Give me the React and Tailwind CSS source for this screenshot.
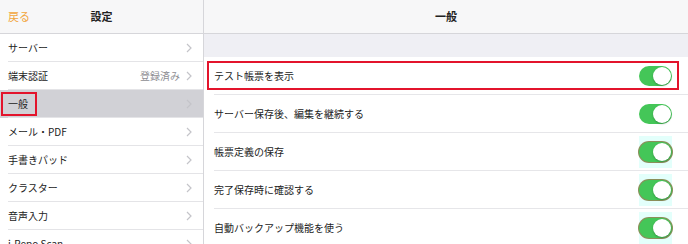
const leftItems = [
  { label: 'サーバー' },
  { label: '端末認証', value: '登録済み' },
  { label: '一般', selected: true },
  { label: 'メール・PDF' },
  { label: '手書きパッド' },
  { label: 'クラスター' },
  { label: '音声入力' },
  { label: 'i-Repo Scan' },
]

const settings = [
  { label: 'テスト帳票を表示', marked: true },
  { label: 'サーバー保存後、編集を継続する' },
  { label: '帳票定義の保存', tint: true },
  { label: '完了保存時に確認する', tint: true },
  { label: '自動バックアップ機能を使う', tint: true },
]

const Chevron = () => (
  <svg width="6" height="10" viewBox="0 0 6 10" className="shrink-0">
    <path d="M1 1l4 4-4 4" fill="none" stroke="#c4c4c9" strokeWidth="1.2" />
  </svg>
)

const Toggle = ({ tint }) => (
  <div className={`flex h-[32px] w-[33px] items-center justify-center ${tint ? 'bg-[#e3fffb]' : ''}`}>
    <div className={`flex h-[20px] w-[33px] items-center justify-end rounded-full bg-[#44c658] p-[1px] ${tint ? 'ring-1 ring-[#8b8f5a]' : ''}`}>
      <div className="h-[18px] w-[18px] rounded-full bg-white shadow-[0_1px_2px_rgba(0,0,0,0.25)]" />
    </div>
  </div>
)

export default function App() {
  return (
    <div className="flex h-[244px] w-[688px] overflow-hidden bg-white text-[#222] font-['Noto_Sans_CJK_JP',sans-serif]">
      {/* Left - menu */}
      <div className="flex w-[204px] shrink-0 flex-col border-r border-[#d6d6da]">
        <div className="grid h-[34px] shrink-0 grid-cols-3 items-center border-b border-[#d6d6da] bg-[#f7f7f8] px-2">
          <span className="text-[11px] text-[#f2a53c]">戻る</span>
          <span className="text-center text-[11px] font-bold">設定</span>
          <span />
        </div>
        {leftItems.map((item) => (
          <div
            key={item.label}
            className={`h-[28px] shrink-0 pl-2 ${item.selected ? 'bg-[#d1d1d6]' : ''}`}
          >
            <div className="flex h-full items-center justify-between border-b border-[#e4e4e7] pr-[11px]">
              {item.selected ? (
                <span className="-ml-[7px] flex h-[24px] items-center border-2 border-[#e3142c] pl-[5px] pr-[7px] text-[10px]">
                  {item.label}
                </span>
              ) : (
                <span className="text-[10px]">{item.label}</span>
              )}
              <div className="flex items-center gap-[6px]">
                {item.value && <span className="text-[10px] text-[#8e8e93]">{item.value}</span>}
                <Chevron />
              </div>
            </div>
          </div>
        ))}
      </div>

      {/* Right - general settings */}
      <div className="flex flex-1 flex-col">
        <div className="flex h-[34px] shrink-0 items-center justify-center border-b border-[#d6d6da] bg-[#f7f7f8]">
          <span className="text-[11px] font-bold">一般</span>
        </div>
        <div className="h-[23px] shrink-0 bg-[#efeff4]" />
        {settings.map((s) => (
          <div key={s.label} className="relative h-[38px] shrink-0 pl-[10px]">
            <div className="flex h-full items-center justify-between border-b border-[#e6e6e9] pr-[16px]">
              <span className="text-[10px]">{s.label}</span>
              <Toggle tint={s.tint} />
            </div>
            {s.marked && (
              <div className="pointer-events-none absolute left-[3px] right-[9px] top-[4px] bottom-[5px] border-2 border-[#e3142c]" />
            )}
          </div>
        ))}
      </div>
    </div>
  )
}
